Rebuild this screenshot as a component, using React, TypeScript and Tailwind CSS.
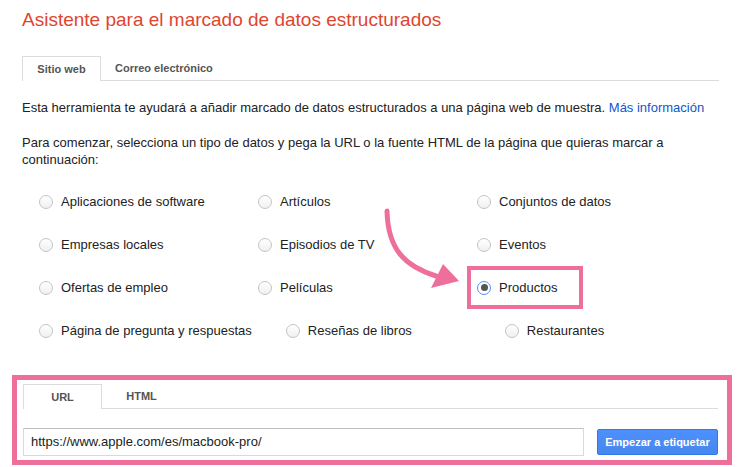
import React from 'react';

const ROWS = [
  ['Aplicaciones de software', 'Artículos', 'Conjuntos de datos'],
  ['Empresas locales', 'Episodios de TV', 'Eventos'],
  ['Ofertas de empleo', 'Películas', 'Productos'],
  ['Página de pregunta y respuestas', 'Reseñas de libros', 'Restaurantes'],
];

function Radio({ checked }: { checked?: boolean }) {
  if (checked) {
    return (
      <span className="flex h-[14px] w-[14px] shrink-0 items-center justify-center rounded-full border border-[#4d90fe] bg-white">
        <span className="h-[7px] w-[7px] rounded-full bg-[#555]" />
      </span>
    );
  }
  return <span className="h-[14px] w-[14px] shrink-0 rounded-full border border-[#c4c4c4] bg-linear-to-b from-white to-[#f0f0f0]" />;
}

function Tabs({ items }: { items: string[] }) {
  return (
    <div className="flex border-b border-[#dcdcdc]">
      {items.map((t, i) => (
        <div
          key={t}
          className={
            i === 0
              ? '-mb-px flex h-[25px] min-w-[79px] items-center justify-center border border-b-0 border-[#dcdcdc] bg-white px-[14px] text-[11px] font-bold text-[#555]'
              : 'flex h-[24px] min-w-[79px] items-center justify-center px-[14px] text-[11px] font-bold text-[#555]'
          }
        >
          {t}
        </div>
      ))}
    </div>
  );
}

export default function App() {
  return (
    <div className="relative h-[467px] w-[750px] overflow-hidden bg-white font-['Liberation_Sans',Arial,sans-serif] text-[#222]">
      <h1 className="pl-[22px] pt-[9px] text-[19px] leading-[22px] text-[#e0452f]">
        Asistente para el marcado de datos estructurados
      </h1>

      <div className="ml-[22px] mt-[25px] w-[697px]">
        <Tabs items={['Sitio web', 'Correo electrónico']} />
      </div>

      <p className="ml-[22px] mt-[18px] w-[697px] text-[13px] leading-[17px]">
        Esta herramienta te ayudará a añadir marcado de datos estructurados a una página web de muestra.{' '}
        <a className="text-[#15c]">Más información</a>
      </p>

      <p className="ml-[22px] mt-[18px] w-[697px] text-[13px] leading-[17px]">
        Para comenzar, selecciona un tipo de datos y pega la URL o la fuente HTML de la página que quieras marcar a
        continuación:
      </p>

      <div className="mt-[12px] pl-[39px]">
        {ROWS.map((row) => (
          <div key={row[0]} className="flex h-[43px] items-center">
            {row.map((label) => (
              <label key={label} className="mr-[34px] flex min-w-[185px] shrink-0 items-center gap-2 text-[13px]">
                <Radio checked={label === 'Productos'} />
                <span>{label}</span>
              </label>
            ))}
          </div>
        ))}
      </div>

      <div className="ml-[12px] mt-[23px] w-[720px] border-[5px] border-[#ee6f9c] bg-white pb-[4px] pl-[6px] pr-[9px] pt-[4px]">
        <Tabs items={['URL', 'HTML']} />
        <div className="mt-[19px] flex items-center gap-[13px]">
          <div className="flex h-[28px] flex-1 items-center border border-[#d9d9d9] border-t-[#c0c0c0] bg-white pl-[7px] text-[13px]">
            https://www.apple.com/es/macbook-pro/
          </div>
          <button className="h-[26px] w-[121px] rounded-[2px] border border-[#3079ed] bg-linear-to-b from-[#4d90fe] to-[#4787ed] text-[11px] font-bold text-white">
            Empezar a etiquetar
          </button>
        </div>
      </div>

      {/* annotations */}
      <div className="pointer-events-none absolute left-[467px] top-[266px] h-[43px] w-[116px] border-4 border-[#ee6f9c]" />
      <svg className="pointer-events-none absolute left-0 top-0" width="750" height="467" viewBox="0 0 750 467">
        <path d="M387,211 C388,250 405,266 436,276" fill="none" stroke="#ee6f9c" strokeWidth="5" strokeLinecap="round" />
        <polygon points="459,281 431,288 443,264" fill="#ee6f9c" />
      </svg>
    </div>
  );
}
